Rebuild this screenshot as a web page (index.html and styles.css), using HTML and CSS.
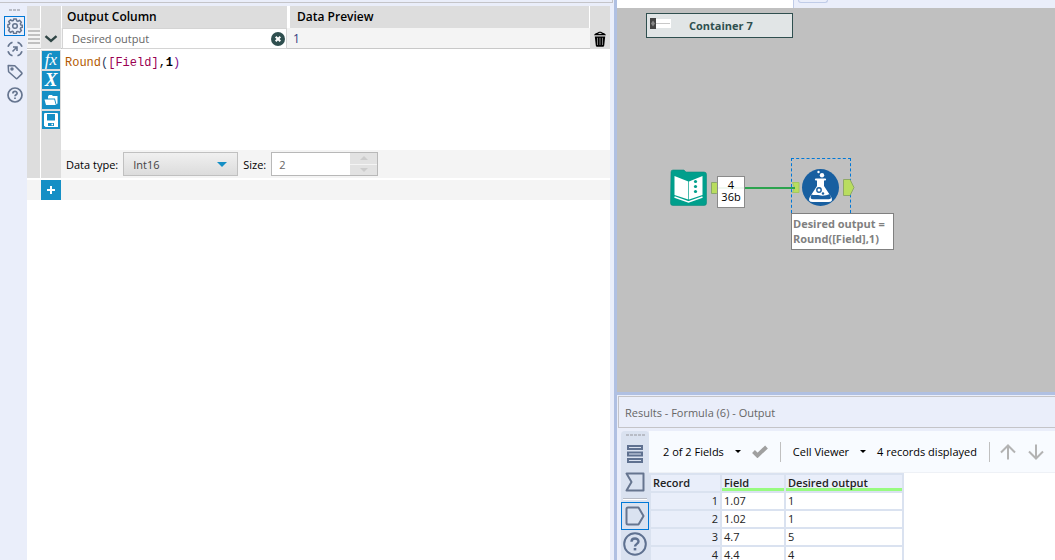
FILE: index.html
```html
<!DOCTYPE html>
<html lang="en">
<head>
    <meta charset="UTF-8">
    <meta name="viewport" content="width=device-width, initial-scale=1.0">
    <title>Results - Formula (6) - Output</title>
    <link rel="stylesheet" href="styles.css">
</head>
<body>
    <div class="app">
        <!-- Left side: configuration -->
        <section class="config">
            <div class="config-title"></div>
            <div class="config-main">
                <nav class="config-rail">
                    <span class="grip"></span>
                    <button class="rail-btn active" aria-label="Configuration">
                        <svg width="16" height="16" viewBox="0 0 16 16" fill="none" stroke="#66758f" stroke-width="1.5" stroke-linejoin="round">
                            <path d="M6.7 1h2.6l.4 1.9 1.2.5 1.6-1.1 1.9 1.9-1.1 1.6.5 1.1 1.6.4v1.9l-1.6.5-.5 1.2 1.1 1.6-1.9 1.9-1.6-1-1.2.4-.4 1.7H6.7l-.4-1.7-1.2-.5-1.6 1.1-1.9-1.9 1-1.6-.4-1.2L.9 9.3V6.8l1.5-.5.4-1.1-1.1-1.6 1.9-1.8 1.5 1.1 1.2-.4z"/>
                            <circle cx="8" cy="8" r="2.3"/>
                        </svg>
                    </button>
                    <button class="rail-btn" aria-label="Navigation">
                        <svg width="16" height="16" viewBox="0 0 16 16" fill="none" stroke="#66758f" stroke-width="1.6">
                            <path d="M1 5.800A7.200 7.200 0 0 1 5.500 1.200M10.500 1.200A7.200 7.200 0 0 1 15 5.800M15 10.200A7.200 7.200 0 0 1 10.500 14.800M5.500 14.800A7.200 7.200 0 0 1 1 10.200M5.500 10.500l4-4M6 6h4v4"/>
                        </svg>
                    </button>
                    <button class="rail-btn" aria-label="Annotation">
                        <svg width="16" height="16" viewBox="0 0 16 16" fill="none" stroke="#66758f" stroke-width="1.5" stroke-linejoin="round">
                            <path d="M1.2 1.5l6.600.200 6.800 6.900c.5.500.5 1 0 1.500l-4.200 4.200c-.5.500-1 .5-1.500 0L1.600 7.700z"/>
                            <circle cx="5" cy="5" r="1" fill="#66758f"/>
                        </svg>
                    </button>
                    <button class="rail-btn" aria-label="Help">
                        <svg width="16" height="16" viewBox="0 0 16 16" fill="none" stroke="#66758f" stroke-width="1.7">
                            <circle cx="8" cy="8" r="7"/>
                            <path d="M5.900 6.400c0-2.600 4.200-2.600 4.200-.1 0 1.500-2.100 1.500-2.100 3"/>
                            <path d="M8 10.400v1.700"/>
                        </svg>
                    </button>
                </nav>

                <div class="editor">
                    <div class="row row-head">
                        <span class="cell"></span>
                        <span class="cell"></span>
                        <span class="cell head-text">Output Column</span>
                        <span class="cell head-text preview-head">Data Preview</span>
                        <span class="cell"></span>
                    </div>

                    <div class="row row-field">
                        <span class="handle"></span>
                        <button class="cell icon-btn" aria-label="Collapse">
                            <svg width="14" height="8" viewBox="0 0 14 8" fill="none" stroke="#2f4545" stroke-width="2.4"><path d="M1.5 1.2L7 6l5.5-4.8"/></svg>
                        </button>
                        <div class="output-name">
                            <input type="text" value="Desired output" aria-label="Output column">
                            <button class="icon-btn" aria-label="Clear">
                                <svg width="14" height="14" viewBox="0 0 14 14"><circle cx="7" cy="7" r="7" fill="#2f4f4f"/><path d="M4.700 4.700l4.600 4.600M9.300 4.700L4.700 9.300" stroke="#fff" stroke-width="2"/></svg>
                            </button>
                        </div>
                        <span class="preview">1</span>
                        <button class="cell icon-btn" aria-label="Delete">
                            <svg width="14" height="16" viewBox="0 0 14 16">
                                <path d="M1 4.200C1.600 2.800 3 2 4.500 1.800 5 .4 9 .4 9.500 1.800 11 2 12.400 2.800 13 4.200z" fill="#000"/>
                                <path d="M5.500 2.400h3" stroke="#ddd"/>
                                <path d="M1.800 5.500h10.400l-1 9c-.1.900-.8 1.300-1.500 1.300H4.300c-.7 0-1.400-.4-1.500-1.300z" fill="#000"/>
                                <path d="M4.500 6.800v7.200M7 6.800v7.200M9.500 6.800v7.200" stroke="#a0a0a0" stroke-width=".8"/>
                            </svg>
                        </button>
                    </div>

                    <div class="row row-body">
                        <span class="cell"></span>
                        <div class="cell tools">
                            <button class="tool" aria-label="Functions"><i>fx</i></button>
                            <button class="tool tool-x" aria-label="Columns and constants"><i>X</i></button>
                            <button class="tool" aria-label="Recent expressions">
                                <svg width="14" height="12" viewBox="0 0 14 12" fill="#fff"><path d="M4 2.500l1-1.500h3l.8 1H13.500v7.500l-1 1-1.500-6H4z"/><path d="M.5 5.500h9.700l1.600 5.500H2z"/></svg>
                            </button>
                            <button class="tool" aria-label="Save expression">
                                <svg width="14" height="14" viewBox="0 0 14 14"><path d="M0 1.200Q0 0 1.200 0h11.600Q14 0 14 1.200V14H1.500L0 12.500z" fill="#fff"/><path d="M3 1h8v6.500H3zM4 10h6v3H4z" fill="#158fc5"/><path d="M7.500 10.800h1.500v1.500H7.500z" fill="#fff"/></svg>
                            </button>
                        </div>
                        <div class="formula">
                            <code class="code"><span class="fn">Round</span><span class="paren">(</span><span class="col">[Field]</span>,<b>1</b><span class="close">)</span></code>
                            <div class="type-bar">
                                <label for="dataType">Data type:</label>
                                <div class="select-wrap">
                                    <select id="dataType">
                                        <option>Int16</option>
                                    </select>
                                </div>
                                <label for="size">Size:</label>
                                <div class="spinner">
                                    <input type="text" id="size" value="2">
                                    <div class="spin-btns">
                                        <button class="up" aria-label="Increase" disabled></button>
                                        <button class="down" aria-label="Decrease" disabled></button>
                                    </div>
                                </div>
                            </div>
                        </div>
                    </div>

                    <div class="row-add">
                        <button class="add-btn" aria-label="Add expression">
                            <svg width="8" height="8" viewBox="0 0 8 8" stroke="#fff" stroke-width="2"><path d="M4 0v8M0 4h8"/></svg>
                        </button>
                    </div>
                </div>
            </div>
        </section>

        <!-- Right side: workflow canvas and results -->
        <div class="side">
            <div class="canvas">
                <div class="tabs"><span class="tab-current"></span><span class="tab-new"></span></div>

                <div class="container-node">
                    <svg width="21" height="11" viewBox="0 0 21 11"><path d="M0 1h21v9H0z" fill="#fff"/><path d="M6 5.500h14" stroke="#c8c8c8"/><path d="M0 0h6v11H0z" fill="#444"/><path d="M3 2.500l2 3-2 3-2-3z" fill="#888"/></svg>
                    <span>Container 7</span>
                </div>

                <svg class="wire" width="84" height="20" viewBox="0 0 84 20">
                    <path d="M.5 4.500h5l3 2v7l-3 2h-5z" fill="#b9dd5f" stroke="#8ba868"/>
                    <path d="M7 10h77" stroke="#2ca34e" stroke-width="2"/>
                </svg>

                <svg class="node-input" width="37" height="37" viewBox="0 0 37 37">
                    <path d="M1 3Q1 1 3 1h11l2 2h18q2.500 0 2.500 2.500V34q0 2.500-2.500 2.500H3Q.5 36.500.5 34z" fill="#009f8c" stroke="#0d8c7e" stroke-width=".6"/>
                    <path d="M4.500 7l13.800 5.500v18L4.500 26z" fill="#fff"/>
                    <path d="M19 12.500L32.500 7v19L19 30.500z" fill="#fff"/>
                    <path d="M4.500 28l14 5 14-5" fill="none" stroke="#fff" stroke-width="1.400"/>
                    <circle cx="25.500" cy="12.500" r="1.600" fill="#009f8c"/>
                    <circle cx="25.500" cy="17.500" r="1.600" fill="#009f8c"/>
                    <circle cx="25.500" cy="22.500" r="1.600" fill="#009f8c"/>
                </svg>

                <div class="count"><span>4</span><span>36b</span></div>

                <div class="node-formula">
                    <svg width="64" height="55" viewBox="0 0 64 55">
                        <path d="M1.500 24.500H8v10H1.500l2-5z" fill="#b9dd5f" stroke="#a5c860"/>
                        <path d="M0 30h4" stroke="#2ca34e" stroke-width="2"/>
                        <path d="M52.500 21.500H59l4 8-4 8h-6.500z" fill="#b9dd5f" stroke="#8fa965"/>
                        <circle cx="29.500" cy="29.500" r="18.500" fill="#185fa0"/>
                        <circle cx="27.500" cy="14" r="1.200" fill="#fff"/>
                        <circle cx="31" cy="17.300" r="2.200" fill="#fff"/>
                        <path d="M25 21.500h9" stroke="#fff" stroke-width="2.200" stroke-linecap="round"/>
                        <path d="M26 22v6L18.800 39q-2.600 5 3 5h15.600q5.400 0 2.800-5L33 28v-6z" fill="#fff"/>
                        <path d="M20.500 36.500c3 1 5 0 8 .8s7 .2 10-1.300l1.200 2.500q1 2.800-2 2.800H22q-3 0-2.200-3z" fill="#185fa0"/>
                        <circle cx="28" cy="32" r="2.200" fill="#fff" stroke="#185fa0" stroke-width="1.400"/>
                        <circle cx="32" cy="35.500" r="1.200" fill="#185fa0"/>
                    </svg>
                </div>
                <div class="annotation">Desired output =<br>Round([Field],1)</div>
            </div>

            <section class="results">
                <h2 class="results-title">Results - Formula (6) - Output</h2>
                <div class="results-main">
                    <nav class="results-rail">
                        <span class="grip grip-wide"></span>
                        <button class="result-btn" aria-label="Messages">
                            <svg width="18" height="20" viewBox="0 0 18 20" fill="none" stroke="#5f7190" stroke-width="2"><path d="M2 2h14v3H2zM2 8.500h14v3H2zM2 15h14v3H2z"/></svg>
                        </button>
                        <button class="result-btn" aria-label="Input">
                            <svg width="20" height="20" viewBox="0 0 20 20" fill="none" stroke="#66758f" stroke-width="2" stroke-linejoin="round"><path d="M1.500 1.500h17v17h-17L6.500 10z"/></svg>
                        </button>
                        <span class="rail-line"></span>
                        <button class="result-btn active" aria-label="Output">
                            <svg width="20" height="20" viewBox="0 0 20 20" fill="none" stroke="#66758f" stroke-width="2" stroke-linejoin="round"><path d="M3 1.500h10.500l5 8.500-5 8.500H3Q1.500 18.500 1.500 17V3Q1.500 1.500 3 1.500z"/></svg>
                        </button>
                        <button class="result-btn" aria-label="Help">
                            <svg width="24" height="24" viewBox="0 0 24 24" fill="none" stroke="#5f7190" stroke-width="2"><circle cx="12" cy="12" r="10.800"/><path d="M8.500 9.700c0-4.200 7-4.200 7-.1 0 2.400-3.500 2.200-3.500 5" stroke-width="2.400"/><path d="M12 16v2.400" stroke-width="2.600"/></svg>
                        </button>
                    </nav>
                    <div class="results-body">
                        <div class="toolbar">
                            <button class="drop">2 of 2 Fields</button>
                            <button class="check" aria-label="Apply">
                                <svg width="16" height="13" viewBox="0 0 16 13" fill="none" stroke="#a0a0a0" stroke-width="4"><path d="M1.500 6.500l4 4L14.500 2"/></svg>
                            </button>
                            <span class="divider"></span>
                            <button class="drop">Cell Viewer</button>
                            <span class="records">4 records displayed</span>
                            <span class="divider"></span>
                            <button class="arrow" aria-label="Previous">
                                <svg width="16" height="16" viewBox="0 0 16 16" fill="none" stroke="#b3b3b3" stroke-width="2"><path d="M8 15.500V2M1 8.500l7-7 7 7"/></svg>
                            </button>
                            <button class="arrow" aria-label="Next">
                                <svg width="16" height="16" viewBox="0 0 16 16" fill="none" stroke="#b3b3b3" stroke-width="2"><path d="M8 .5V14M1 7.500l7 7 7-7"/></svg>
                            </button>
                        </div>
                        <table class="grid">
                            <thead>
                                <tr><th class="c-record">Record</th><th class="c-field ok">Field</th><th class="c-output ok">Desired output</th></tr>
                            </thead>
                            <tbody>
                                <tr><th>1</th><td>1.07</td><td>1</td></tr>
                                <tr><th>2</th><td>1.02</td><td>1</td></tr>
                                <tr><th>3</th><td>4.7</td><td>5</td></tr>
                                <tr><th>4</th><td>4.4</td><td>4</td></tr>
                            </tbody>
                        </table>
                    </div>
                </div>
            </section>
        </div>
    </div>
</body>
</html>
```

FILE: styles.css
```css
* {
    box-sizing: border-box;
}

body {
    margin: 0;
    font-family: "Open Sans", "Noto Sans", sans-serif;
    font-size: 11px;
    color: #000;
    background: #fff;
}

button, input, select {
    font: inherit;
    color: inherit;
    margin: 0;
    padding: 0;
    border: 0;
    border-radius: 0;
    background: none;
    min-width: 0;
}

svg {
    display: block;
    flex: none;
}

.app {
    display: grid;
    grid-template-columns: 617fr 438fr;
    height: 100vh;
    overflow: hidden;
}

/* configuration panel */

.config {
    display: flex;
    flex-direction: column;
    min-width: 0;
    background: #eaeefa;
    border-right: 3px solid #b0c0e2;
}

.config-title {
    height: 3px;
    margin: 0 1px 3px 0;
    border-right: 1px solid #c4c4c8;
    border-bottom: 1px solid #c4c4c8;
}

.config-main {
    display: flex;
    flex: 1;
    padding-right: 4px;
}

.config-rail {
    display: flex;
    flex-direction: column;
    align-items: center;
    gap: 3px;
    width: 27px;
    padding-top: 3px;
    padding-left: 2px;
}

.grip {
    width: 11px;
    height: 2px;
    margin-bottom: 2px;
    background: repeating-linear-gradient(90deg, #b8bcc6 0 3px, transparent 3px 4px);
}

.rail-btn {
    display: flex;
    align-items: center;
    justify-content: center;
    width: 21px;
    height: 20px;
}

.active {
    border: 1px solid #0078d7;
}

.editor {
    flex: 1;
    min-width: 0;
    background: #fff;
}

.row {
    display: grid;
    grid-template-columns: 13px 20px 225px 1fr 20px;
    column-gap: 1px;
}

.cell {
    background: #ddd;
}

.row-head {
    height: 20px;
    margin-bottom: 2px;
}

.head-text {
    padding-left: 5px;
    font-size: 12px;
    font-weight: 600;
    line-height: 22px;
}

.preview-head {
    margin-left: 2px;
    padding-left: 7px;
}

.row-field {
    height: 21px;
    margin-bottom: 1px;
    background: #f4f4f4;
    border-bottom: 1px solid #c8c8c8;
}

.handle {
    height: 14px;
    margin: 2px 0 0 1px;
    background: repeating-linear-gradient(#c0c0c0 0 2px, transparent 2px 4px);
}

.icon-btn {
    display: flex;
    align-items: center;
    justify-content: center;
}

.output-name {
    display: flex;
    align-items: center;
    padding: 0 1px 0 9px;
    background: #fff;
    border: 1px solid #d4d4d4;
    color: #666;
}

.output-name input {
    flex: 1;
    line-height: 16px;
}

.preview {
    padding-left: 5px;
    font-size: 12px;
    line-height: 21px;
    color: #333a80;
}

.row-body {
    min-height: 128px;
    grid-template-columns: 13px 20px 1fr;
}

.tools {
    display: flex;
    flex-direction: column;
    align-items: center;
    gap: 2px;
    padding-top: 1px;
}

.tool {
    display: flex;
    align-items: center;
    justify-content: center;
    width: 18px;
    height: 18px;
    color: #fff;
    background: #158fc5;
    font-family: "Liberation Serif", serif;
    font-size: 17px;
    line-height: 16px;
}

.tool-x {
    font-size: 19px;
    font-weight: bold;
}

.formula {
    display: flex;
    flex-direction: column;
    margin-left: -1px;
}

.code {
    flex: 1;
    padding: 5px 4px;
    font-family: "Liberation Mono", monospace;
    font-size: 12px;
    line-height: 16px;
}

.fn {
    color: #b35900;
}

.paren {
    color: #2c3c60;
}

.col {
    color: #9a0050;
}

.close {
    color: #80108c;
}

.type-bar {
    display: flex;
    align-items: center;
    gap: 5px;
    height: 28px;
    padding-left: 5px;
    background: #f4f4f4;
}

.select-wrap {
    position: relative;
}

.select-wrap::after {
    content: "";
    position: absolute;
    right: 11px;
    top: 10px;
    border: 5px solid transparent;
    border-top-color: #158fc5;
    border-bottom: 0;
    pointer-events: none;
}

.select-wrap select {
    display: block;
    appearance: none;
    width: 115px;
    height: 24px;
    padding: 0 9px;
    color: #444;
    border: 1px solid #c0c0c0;
    background: linear-gradient(#f0f0f0, #dcdcdc);
}

.spinner {
    display: flex;
    width: 107px;
    height: 24px;
    border: 1px solid #b8b8b8;
    background: #fff;
}

.spinner input {
    flex: 1;
    width: 0;
    padding-left: 7px;
    color: #666;
}

.spin-btns {
    display: flex;
    flex-direction: column;
    width: 27px;
}

.spin-btns button {
    display: flex;
    align-items: center;
    justify-content: center;
    flex: 1;
    background: #e2e2e2;
}

.spin-btns button::after {
    content: "";
    border: 4px solid transparent;
}

.spin-btns .up {
    border-bottom: 1px solid #f4f4f4;
}

.spin-btns .up::after {
    border-bottom-color: #ccc;
    border-top: 0;
}

.spin-btns .down::after {
    border-top-color: #ccc;
    border-bottom: 0;
}

.row-add {
    height: 20px;
    margin-top: 2px;
    padding-left: 14px;
    background: #f4f4f4;
}

.add-btn {
    display: flex;
    align-items: center;
    justify-content: center;
    width: 20px;
    height: 20px;
    background: #158fc5;
}

/* workflow canvas */

.side {
    display: grid;
    grid-template-rows: 392fr 168fr;
    min-width: 0;
    min-height: 0;
}

.canvas {
    position: relative;
    overflow: hidden;
    background: #c0c0c0;
}

.tabs {
    display: grid;
    grid-template-columns: 177px 1fr;
    height: 8px;
    background: #eaeefa;
}

.tab-current {
    background: #fff;
    border-right: 1px solid #c0cce8;
}

.tab-new {
    width: 30px;
    height: 3px;
    margin-left: 4px;
    border: 1px solid #c0cce8;
    border-top: 0;
    border-radius: 0 0 3px 3px;
}

.container-node {
    position: absolute;
    left: 29px;
    top: 13px;
    display: flex;
    gap: 18px;
    width: 147px;
    height: 25px;
    padding: 4px 3px;
    border: 1px solid #2f4f4f;
    background: #e1e5e6;
    color: #2f4f4f;
    font-weight: bold;
    line-height: 16px;
}

.wire {
    position: absolute;
    left: 94px;
    top: 178px;
}

.node-input {
    position: absolute;
    left: 53px;
    top: 169px;
}

.count {
    position: absolute;
    left: 100px;
    top: 176px;
    display: flex;
    flex-direction: column;
    align-items: center;
    width: 28px;
    height: 32px;
    padding-top: 2px;
    border: 1px solid #8a8a8a;
    background: linear-gradient(#fff 0 10px, #eff8f1 10px 12px, #fff 12px);
    line-height: 12px;
}

.node-formula {
    position: absolute;
    left: 174px;
    top: 158px;
    width: 60px;
    height: 55px;
    border: 1px dashed #0078d7;
    border-bottom: 0;
}

.node-formula svg {
    margin: -1px;
}

.annotation {
    position: absolute;
    left: 174px;
    top: 213px;
    width: 103px;
    height: 37px;
    padding: 2px 1px;
    border: 1px solid #808080;
    background: #fff;
    color: #808080;
    font-weight: bold;
    line-height: 15px;
    white-space: nowrap;
}

/* results panel */

.results {
    display: flex;
    flex-direction: column;
    min-height: 0;
    overflow: hidden;
    border-top: 3px solid #b0c0e2;
    background: #eaeefa;
}

.results-title {
    flex: none;
    height: 32px;
    margin: 1px 0 3px 1px;
    padding-left: 6px;
    border: 1px solid #c4c4c8;
    border-right: 0;
    color: #666;
    font-size: 11px;
    font-weight: normal;
    line-height: 31px;
}

.results-main {
    display: flex;
    flex: 1;
    min-height: 0;
    padding-left: 4px;
}

.results-rail {
    display: flex;
    flex: none;
    flex-direction: column;
    align-items: center;
    width: 28px;
    padding-top: 3px;
    border-radius: 4px 4px 0 0;
    background: #dae2f0;
}

.grip-wide {
    width: 19px;
    margin-bottom: 4px;
}

.result-btn {
    display: flex;
    align-items: center;
    justify-content: center;
    width: 28px;
    height: 28px;
    flex: none;
}

.rail-line {
    width: 24px;
    height: 2px;
    margin: 2px 0;
    border-top: 1px solid #b8bcc6;
    background: #fff;
    flex: none;
}

.results-body {
    flex: 1;
    min-width: 0;
    background: #fff;
}

.toolbar {
    display: flex;
    align-items: center;
    height: 42px;
    padding-left: 14px;
    background: #f8fbff;
    border-bottom: 1px solid #eef1f6;
    white-space: nowrap;
}

.drop {
    display: flex;
    align-items: center;
    gap: 11px;
}

.drop::after {
    content: "";
    border: 3px solid transparent;
    border-top-color: #000;
    border-bottom: 0;
}

.check {
    margin: 0 12px 0 11px;
}

.divider {
    width: 1px;
    height: 20px;
    background: #c0c0c0;
}

.divider + .drop {
    margin-left: 12px;
}

.records {
    margin: 0 12px 0 11px;
}

.arrow {
    margin-left: 11px;
}

.records + .divider + .arrow {
    margin-left: 10px;
}

.arrow + .arrow {
    margin-left: 12px;
}

.grid {
    table-layout: fixed;
    width: 253px;
    border-collapse: collapse;
    color: #222;
}

.grid th, .grid td {
    height: 18px;
    padding: 0 2px;
    border: 2px solid #dae2f0;
    font-size: 11px;
    line-height: 16px;
    text-align: left;
    white-space: nowrap;
}

.grid thead th {
    background: #e9eefa;
    font-weight: 600;
}

.grid thead .ok {
    box-shadow: inset 0 -3px #98fb80;
}

.grid tbody th {
    background: #e9eefa;
    font-weight: normal;
    text-align: right;
}

.c-record {
    width: 71px;
}

.c-field {
    width: 64px;
}

.c-output {
    width: 118px;
}
```
